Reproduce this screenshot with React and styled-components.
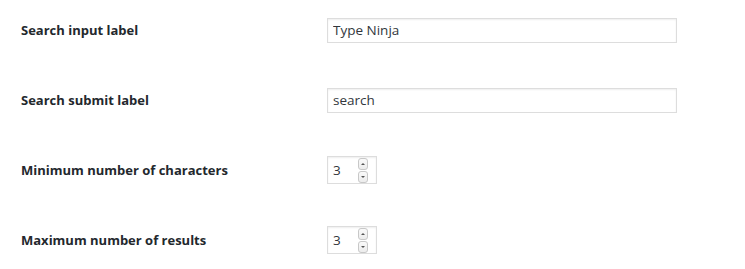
import React from "react";
import styled, { createGlobalStyle } from "styled-components";

const Global = createGlobalStyle`
  html, body { margin: 0; padding: 0; background: #fff; }
  body { font-family: "Open Sans", "Noto Sans", sans-serif; }
`;

const Form = styled.div`
  display: flex;
  flex-direction: column;
  gap: 42px;
  padding: 16px 0 0 21px;
`;

const Row = styled.div`
  display: grid;
  grid-template-columns: 306px auto;
  align-items: center;
  min-height: 28px;
`;

const Label = styled.label`
  font-size: 13px;
  font-weight: 700;
  color: #23282d;
`;

const TextInput = styled.input`
  box-sizing: border-box;
  width: 350px;
  height: 25px;
  border: 1px solid #ddd;
  box-shadow: inset 0 1px 2px rgba(0, 0, 0, 0.07);
  padding: 0 5px;
  font-family: "Open Sans", "Noto Sans", sans-serif;
  font-size: 13.5px;
  color: #32373c;
  outline: none;
  margin: 0;
`;

const NumberBox = styled.div`
  box-sizing: border-box;
  width: 50px;
  height: 28px;
  border: 1px solid #ddd;
  box-shadow: inset 0 1px 2px rgba(0, 0, 0, 0.07);
  display: flex;
  align-items: center;
  justify-content: space-between;
  padding: 0 8px 0 5px;
  font-size: 13.5px;
  color: #32373c;
`;

const Spinner = styled.div`
  display: flex;
  flex-direction: column;
  gap: 1px;
`;

const SpinButton = styled.div`
  box-sizing: border-box;
  width: 10px;
  height: 12px;
  border: 1px solid #c8c8c8;
  border-radius: 3px;
  background: linear-gradient(#fafafa, #ececec);
  display: flex;
  align-items: center;
  justify-content: center;
  &::after {
    content: "";
    width: 0;
    height: 0;
    border-left: 2px solid transparent;
    border-right: 2px solid transparent;
    ${(p) =>
      p.$up
        ? "border-bottom: 2px solid #555;"
        : "border-top: 2px solid #555;"}
  }
`;

function NumberField({ value }) {
  return (
    <NumberBox>
      <span>{value}</span>
      <Spinner>
        <SpinButton $up />
        <SpinButton />
      </Spinner>
    </NumberBox>
  );
}

export default function App() {
  return (
    <>
      <Global />
      <Form>
        <Row>
          <Label>Search input label</Label>
          <TextInput defaultValue="Type Ninja" />
        </Row>
        <Row>
          <Label>Search submit label</Label>
          <TextInput defaultValue="search" />
        </Row>
        <Row>
          <Label>Minimum number of characters</Label>
          <NumberField value="3" />
        </Row>
        <Row>
          <Label>Maximum number of results</Label>
          <NumberField value="3" />
        </Row>
      </Form>
    </>
  );
}
